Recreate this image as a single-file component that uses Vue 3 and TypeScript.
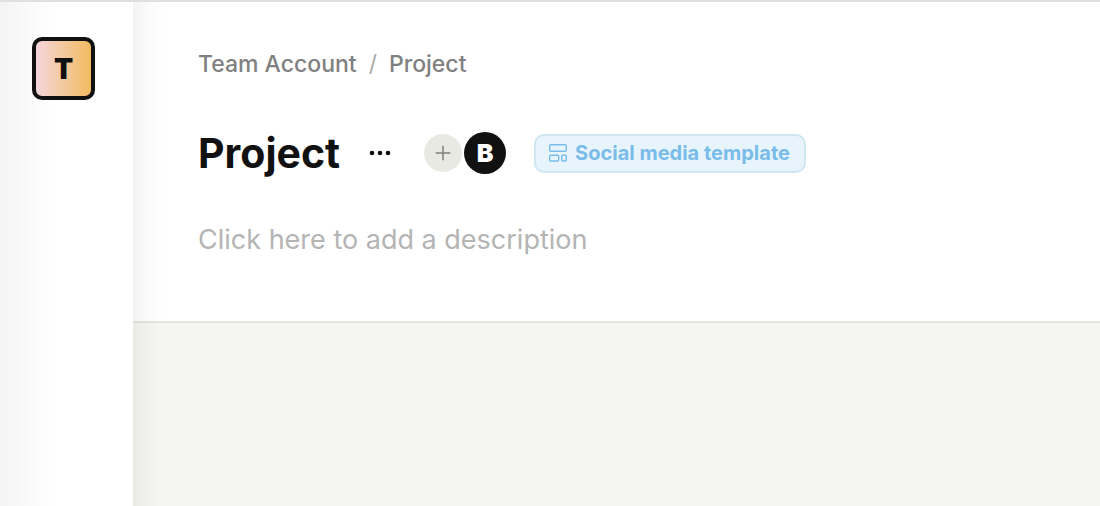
<script setup lang="ts">
import { ref } from 'vue'

const team = ref({ name: 'Team Account', initial: 'T' })
const project = ref({ name: 'Project', template: 'Social media template' })
const description = ref('')
</script>

<template>
  <div class="app">
    <nav class="sidebar" aria-label="Teams">
      <button class="team" type="button" :aria-label="team.name">{{ team.initial }}</button>
    </nav>
    <main class="main">
      <header class="header">
        <nav class="crumbs" aria-label="Breadcrumb">
          <a href="#team">{{ team.name }}</a>
          <span class="slash">/</span>
          <a href="#project">{{ project.name }}</a>
        </nav>
        <div class="title-row">
          <h1>{{ project.name }}</h1>
          <button class="more" type="button" aria-label="More options">
            <svg width="22" height="6" viewBox="0 0 22 6" fill="#111">
              <circle cx="3" cy="3" r="2.3" />
              <circle cx="11" cy="3" r="2.3" />
              <circle cx="19" cy="3" r="2.3" />
            </svg>
          </button>
          <div class="members">
            <button class="add" type="button" aria-label="Add member">
              <svg width="16" height="16" viewBox="0 0 16 16" stroke="#80807c" stroke-width="1.5" stroke-linecap="round">
                <path d="M8 1.2v13.6M1.2 8h13.6" />
              </svg>
            </button>
            <button class="member" type="button" aria-label="Member B">B</button>
          </div>
          <a class="tag" href="#template">
            <svg width="20" height="20" viewBox="0 0 20 20" fill="none" stroke="#79bcea" stroke-width="1.4">
              <rect x="1.7" y="1.7" width="16.6" height="6.6" rx="1" />
              <rect x="1.7" y="12.2" width="9" height="5.8" rx="1" />
              <rect x="13.7" y="12.2" width="4.6" height="5.8" rx="1" />
            </svg>
            {{ project.template }}
          </a>
        </div>
        <input
          v-model="description"
          class="description"
          type="text"
          aria-label="Project description"
          placeholder="Click here to add a description"
        />
      </header>
      <section class="canvas" aria-label="Project content"></section>
    </main>
  </div>
</template>

<style>
body {
  margin: 0;
}
</style>

<style scoped>
.app {
  box-sizing: border-box;
  display: flex;
  min-height: 100vh;
  border-top: 2px solid #dfe0df;
  background: #fff;
  font-family: Inter, "Liberation Sans", sans-serif;
  color: #111;
}
.app *,
.app *::before {
  box-sizing: border-box;
}
button {
  display: flex;
  align-items: center;
  justify-content: center;
  padding: 0;
  border: 0;
  background: none;
  font-family: inherit;
  color: inherit;
  cursor: pointer;
}
a {
  color: inherit;
  text-decoration: none;
}
.sidebar {
  flex: 0 0 133px;
  padding: 35px 32px;
  background: linear-gradient(90deg, #f4f4f4, #fff 56px);
}
.team {
  width: 63px;
  height: 63px;
  border: 4px solid #111;
  border-radius: 10px;
  background: linear-gradient(90deg, #f5d5dc, #f3c898 55%, #f3bc61);
  font-size: 28px;
  font-weight: 900;
}
.main {
  position: relative;
  flex: 1;
  min-width: 0;
  display: flex;
  flex-direction: column;
}
.main::before {
  content: "";
  position: absolute;
  top: 0;
  bottom: 0;
  left: 0;
  width: 32px;
  background: linear-gradient(90deg, rgba(20, 20, 10, 0.05), rgba(20, 20, 10, 0.015) 50%, transparent);
  pointer-events: none;
}
.header {
  padding: 46px 65px 61px;
  border-bottom: 2px solid #e4e5e1;
}
.crumbs {
  display: flex;
  gap: 12px;
  font-size: 23px;
  line-height: 32px;
  font-weight: 500;
  color: #808080;
}
.slash {
  font-weight: 400;
  color: #aaa;
}
.title-row {
  display: flex;
  align-items: center;
  margin-top: 46px;
}
h1 {
  margin: 0;
  font-size: 41px;
  line-height: 54px;
  font-weight: 700;
}
.more {
  width: 42px;
  height: 42px;
  margin-left: 19px;
}
.members {
  display: flex;
  align-items: center;
  gap: 2px;
  margin-left: 23px;
}
.add {
  width: 38px;
  height: 38px;
  border-radius: 50%;
  background: #e9e9e3;
}
.member {
  width: 42px;
  height: 42px;
  border-radius: 50%;
  background: #111;
  color: #fff;
  font-size: 25px;
  font-weight: 900;
}
.tag {
  display: flex;
  align-items: center;
  gap: 7px;
  height: 39px;
  margin-left: 28px;
  padding: 0 14px 0 12px;
  border: 2px solid #cfe7f1;
  border-radius: 10px;
  background: #e7f4fb;
  font-size: 20px;
  font-weight: 700;
  color: #79bcea;
  white-space: nowrap;
}
.description {
  display: block;
  width: 100%;
  height: 40px;
  margin-top: 39px;
  margin-bottom: 1px;
  padding: 0;
  border: 0;
  outline: 0;
  background: none;
  font-family: inherit;
  font-size: 27px;
  color: #111;
}
.description::placeholder {
  color: #b4b4b4;
  opacity: 1;
}
.canvas {
  flex: 1;
  background: #f5f6f1;
}
</style>
